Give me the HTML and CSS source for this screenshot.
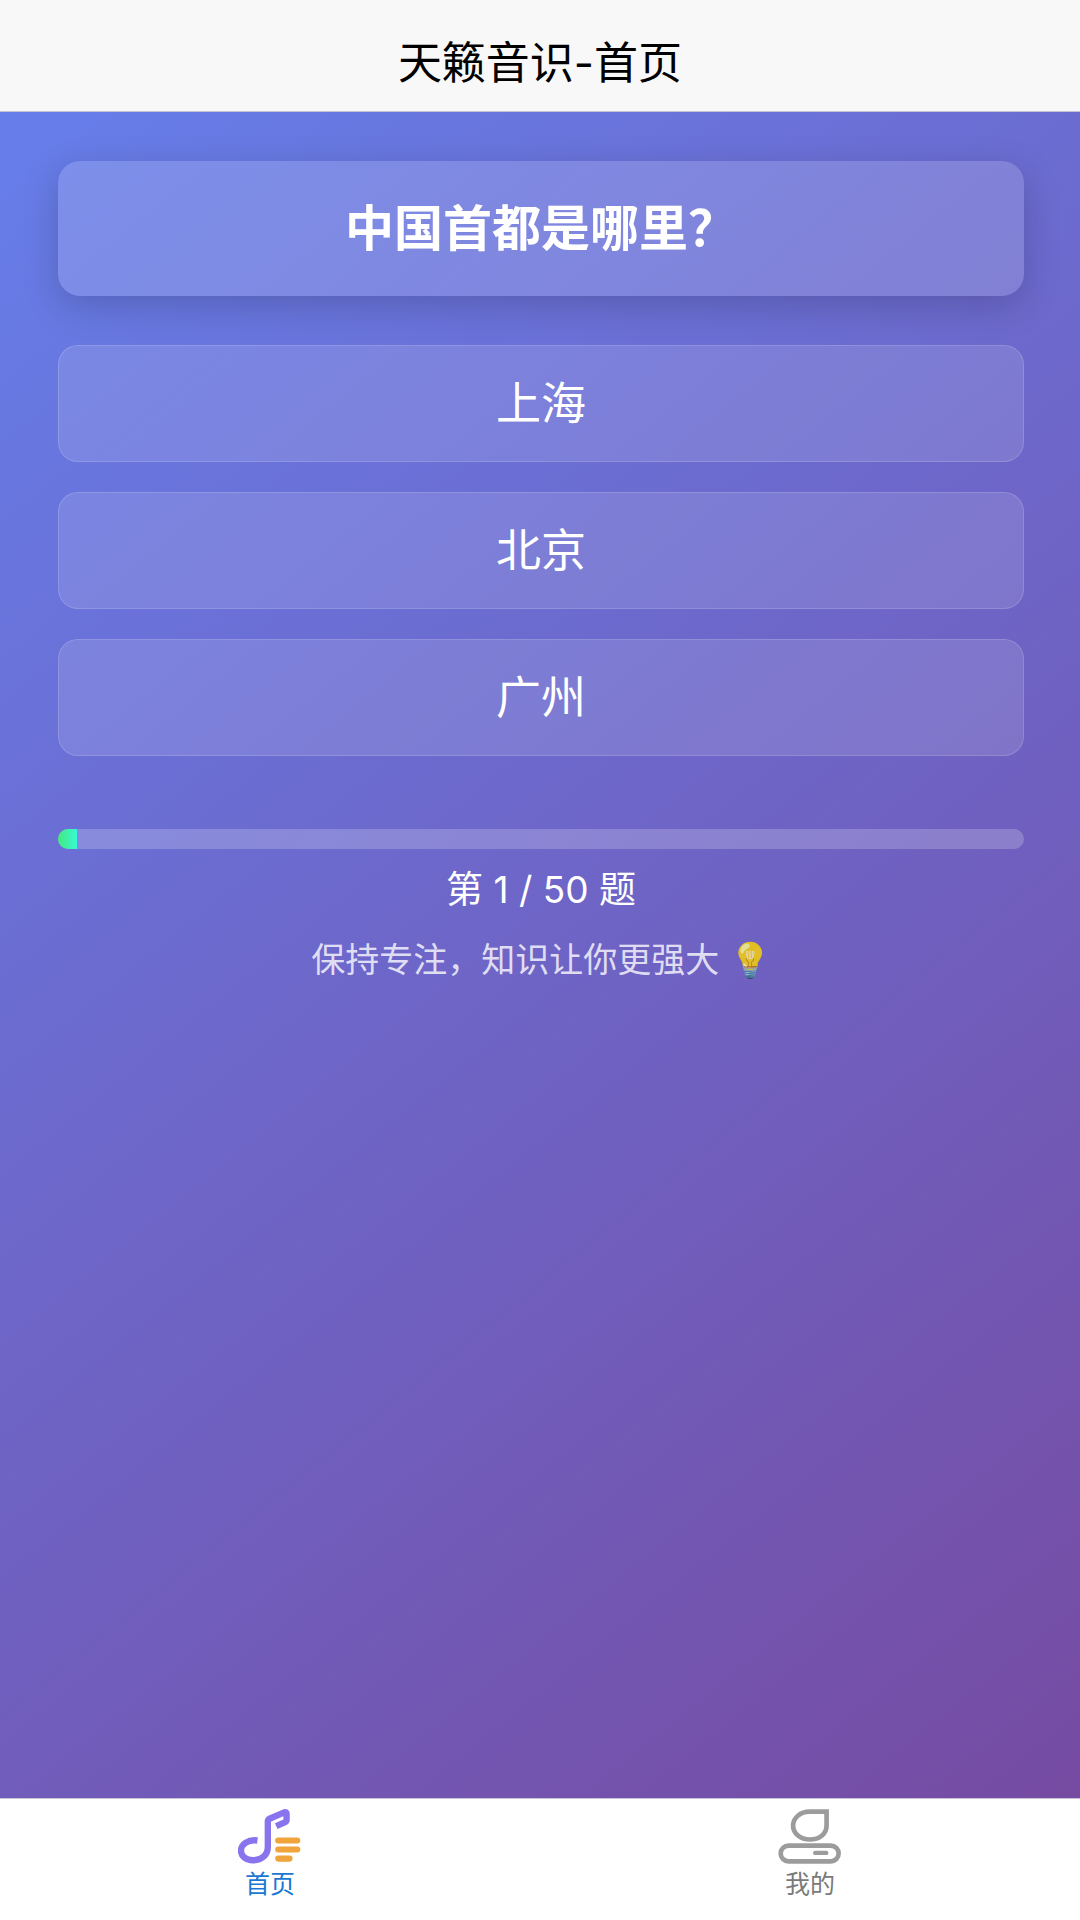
FILE: index.html
```html
<!DOCTYPE html>
<html lang="zh-CN">

<head>
    <meta charset="UTF-8">
    <meta name="viewport" content="width=device-width, initial-scale=1.0">
    <title>天籁音识-首页</title>
    <link rel="stylesheet" href="styles.css">
</head>

<body>
    <header class="nav-bar">
        <h1 class="nav-title">天籁音识-首页</h1>
    </header>

    <main class="quiz">
        <h2 class="question">中国首都是哪里？</h2>

        <div class="options">
            <button type="button" class="option">上海</button>
            <button type="button" class="option">北京</button>
            <button type="button" class="option">广州</button>
        </div>

        <div class="progress">
            <div class="progress-fill" style="width: 2%"></div>
        </div>
        <p class="progress-text">第 1 / 50 题</p>
        <p class="tip">保持专注，知识让你更强大 💡</p>
    </main>

    <nav class="tab-bar">
        <a href="#home" class="tab active">
            <svg class="tab-icon" viewBox="54 54 194 170" fill="none" aria-hidden="true">
                <!-- music note -->
                <path d="M112 151 C84 147 64 162 63 180 C62 198 78 210 99 210 C124 210 143 194 143 170 L143 94 Q143 89 148 86 L192 67 Q199 65 199 71 L199 90 Q199 94 195 96 L168 108" stroke="#8a74ee" stroke-width="19" stroke-linejoin="round" />
                <!-- list lines -->
                <path d="M174 151 H231 M174 178 H231 M174 205 H208" stroke="#f0a43c" stroke-width="18" stroke-linecap="round" />
            </svg>
            <span>首页</span>
        </a>
        <a href="#mine" class="tab">
            <svg class="tab-icon" viewBox="54 54 194 170" fill="none" stroke="#9c9c9c" aria-hidden="true">
                <path d="M148 65 H199 V106 C199 132 177 148 149 148 C121 148 99 130 99 106 C99 83 121 65 148 65 Z" stroke-width="14" />
                <rect x="62" y="166" width="173" height="47" rx="23.5" stroke-width="14" />
                <path d="M165 188 H198" stroke-width="13" stroke-linecap="round" />
            </svg>
            <span>我的</span>
        </a>
    </nav>
</body>

</html>
```
FILE: styles.css
```css
* {
    box-sizing: border-box;
}

body {
    margin: 0;
    min-height: 100vh;
    display: flex;
    flex-direction: column;
    font-family: Inter, "Noto Sans CJK SC", sans-serif;
}

h1,
h2,
p {
    margin: 0;
}

.nav-bar {
    padding: 33px 16px 18px;
    background-color: #f8f8f8;
    border-bottom: 1px solid #c4c4d4;
    text-align: center;
}

.nav-title {
    font-size: 44px;
    font-weight: 400;
    line-height: 60px;
    color: #000;
}

.quiz {
    flex: 1;
    padding: 49px 56px 49px 58px;
    background: linear-gradient(141deg, #667eea, #764ba2);
    color: #fff;
    text-align: center;
}

.question {
    padding: 36px;
    border-radius: 22px;
    background-color: rgba(255, 255, 255, 0.15);
    box-shadow: 0 10px 36px rgba(0, 0, 0, 0.18);
    font-size: 49px;
    font-weight: 700;
    line-height: 63px;
}

.options {
    display: flex;
    flex-direction: column;
    gap: 30px;
    margin-top: 49px;
}

.option {
    padding: 28px;
    border: 1px solid rgba(255, 255, 255, 0.15);
    border-radius: 20px;
    background-color: rgba(255, 255, 255, 0.12);
    color: #fff;
    font-family: inherit;
    font-size: 45px;
    line-height: 59px;
    cursor: pointer;
}

.progress {
    height: 20px;
    margin-top: 73px;
    border-radius: 10px;
    background-color: rgba(255, 255, 255, 0.2);
    overflow: hidden;
}

.progress-fill {
    height: 100%;
    background: linear-gradient(90deg, #43e97b, #38f9d7);
}

.progress-text {
    margin-top: 17px;
    font-size: 37px;
    line-height: 48px;
}

.tip {
    margin-top: 22px;
    font-size: 34px;
    line-height: 48px;
    color: rgba(255, 255, 255, 0.8);
}

.tab-bar {
    display: flex;
    height: 122px;
    background-color: #fff;
    border-top: 1px solid #c4c4d4;
}

.tab {
    flex: 1;
    display: flex;
    flex-direction: column;
    align-items: center;
    padding-top: 9px;
    color: #7a7a7a;
    font-size: 25px;
    line-height: 38px;
    text-decoration: none;
}

.tab.active {
    color: #1a78d2;
}

.tab-icon {
    width: 65px;
    height: 57px;
}
```
